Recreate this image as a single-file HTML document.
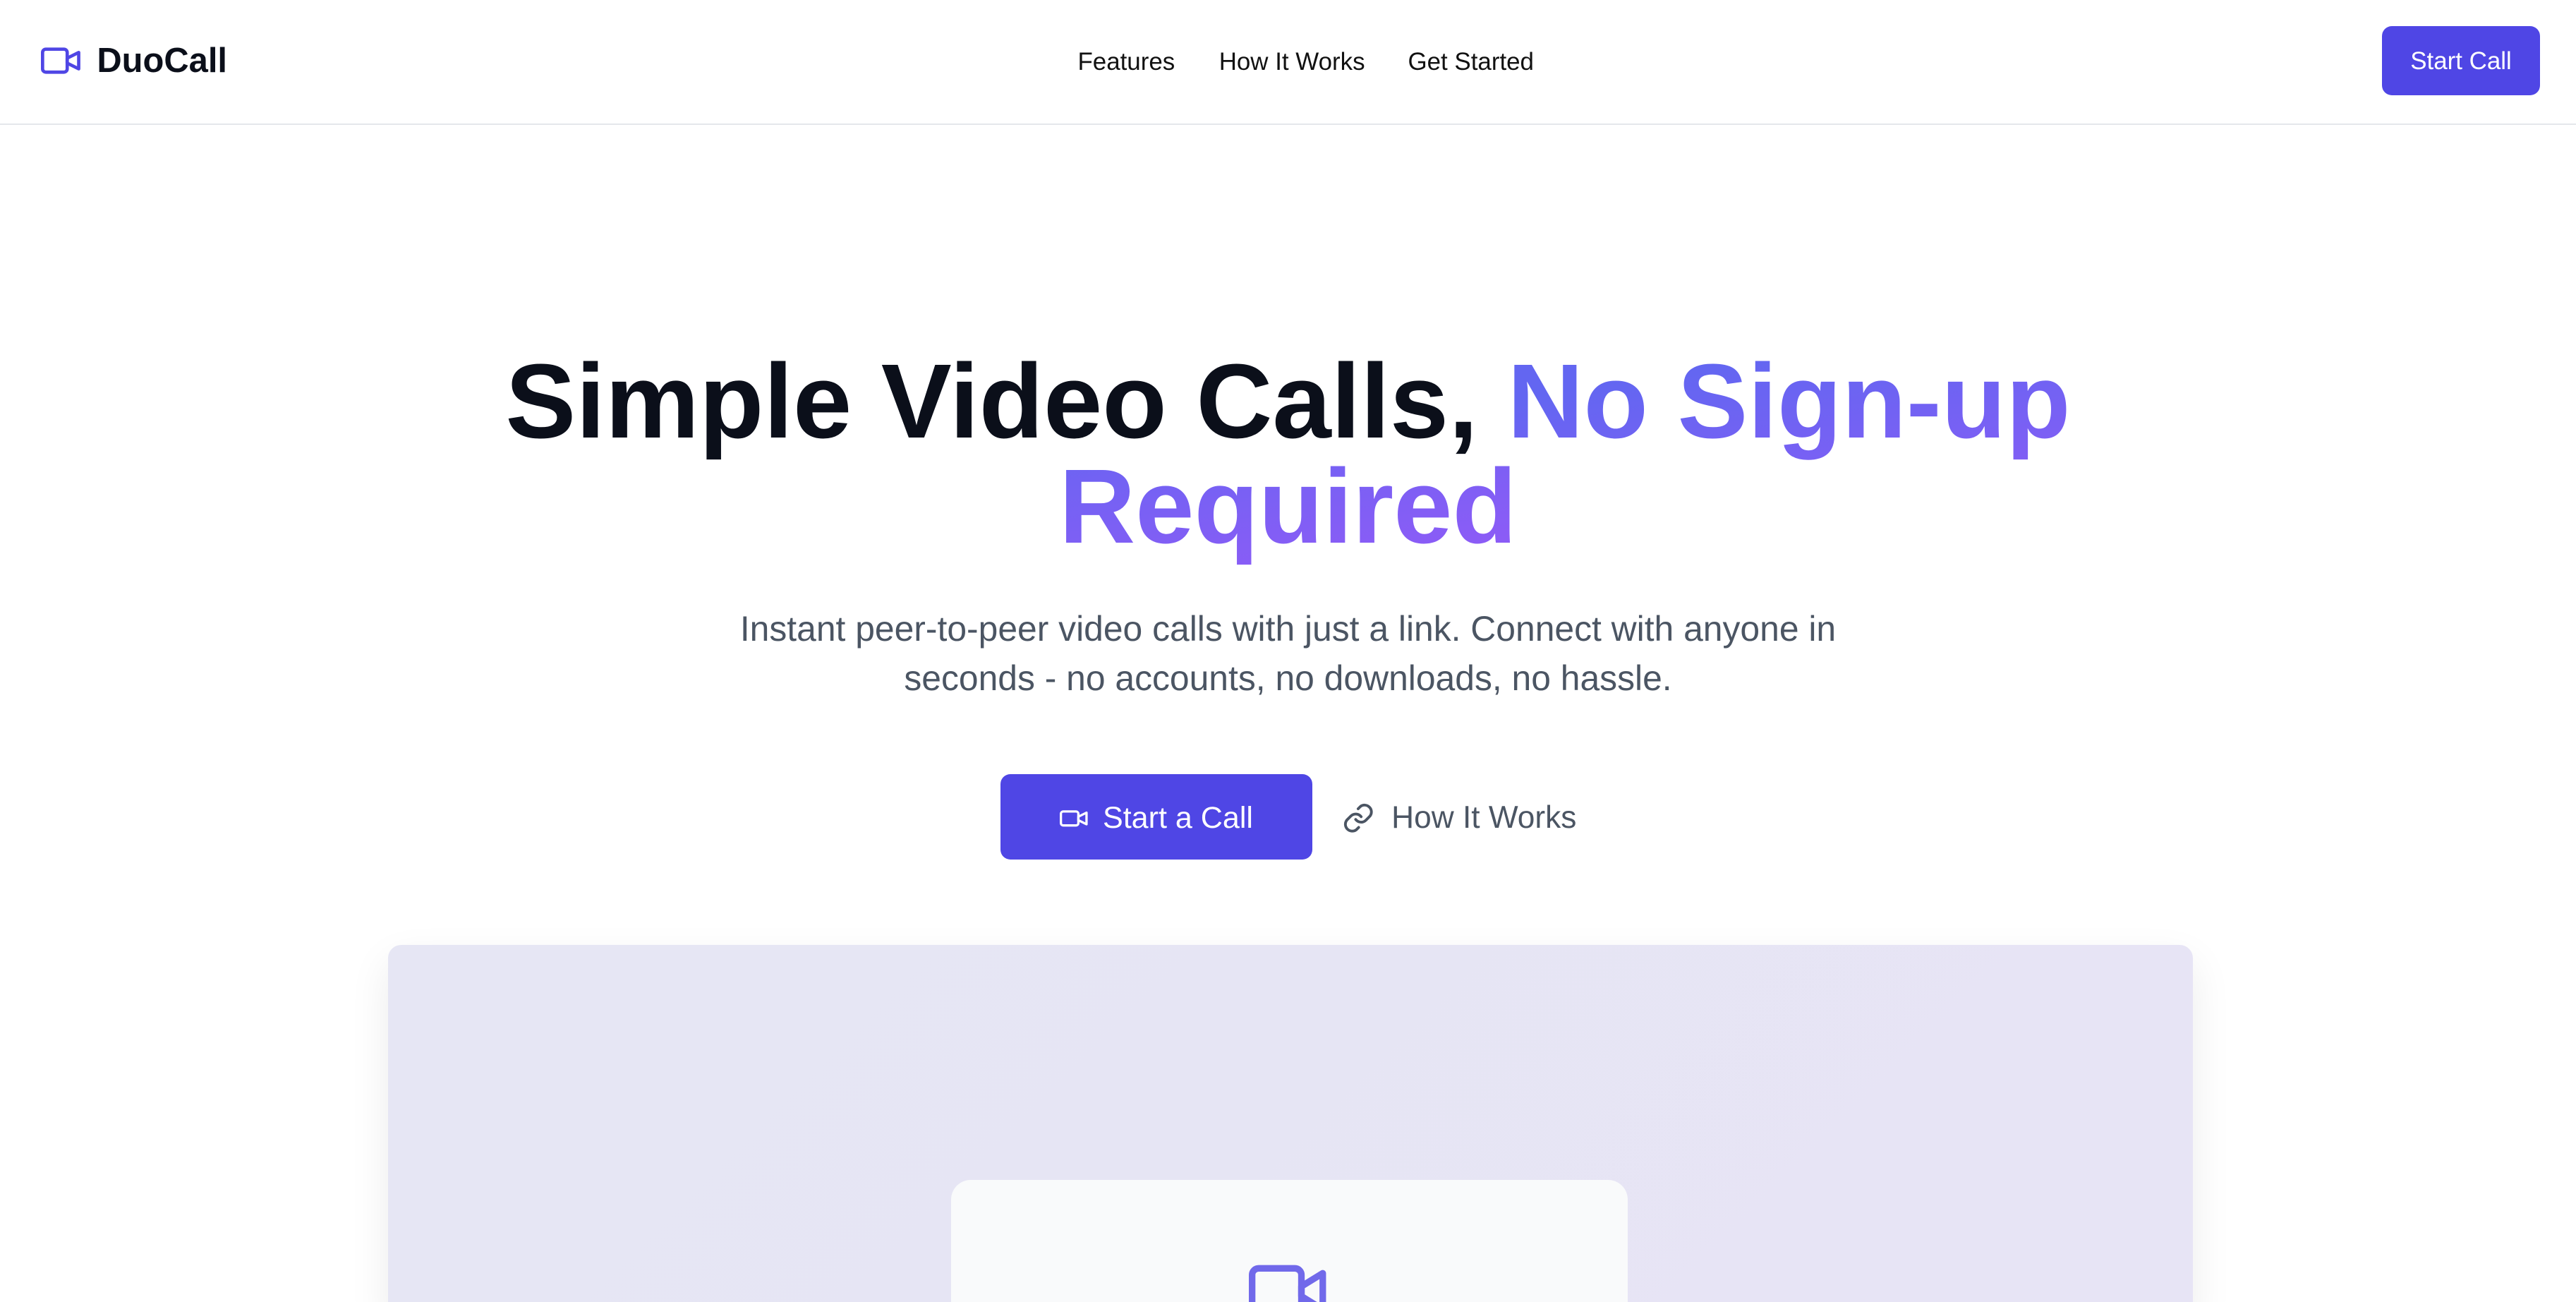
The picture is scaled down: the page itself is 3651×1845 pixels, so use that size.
<!DOCTYPE html>
<html><head><meta charset="utf-8"><style>
html,body{margin:0;padding:0;background:#fff;overflow:hidden}
body{zoom:2.32844;width:1568px;height:792px;font-family:"Liberation Sans",sans-serif;position:relative;overflow:hidden}
nav{position:absolute;left:0;top:0;width:1568px;height:75px;border-bottom:1px solid #e5e7eb;background:#fff}
.logo{position:absolute;left:25px;top:25px;display:flex;align-items:center;font-weight:700;font-size:21px;color:#0b0f1a}
.logo svg{margin-right:10px}
.links{position:absolute;top:29px;font-size:15px;color:#111}
.links span{position:absolute;white-space:nowrap}
.btn{position:absolute;left:1450px;top:16px;width:96px;height:42px;background:#4f46e5;border-radius:6px;color:#fff;font-size:15px;display:flex;align-items:center;justify-content:center;padding-top:1px;box-sizing:border-box}
h1{position:absolute;left:0;top:212px;width:1568px;margin:0;text-align:center;font-size:64.3px;line-height:64px;font-weight:700;color:#0b0f1a}
.grad{background:linear-gradient(170deg,#6366f1 20%,#8b5cf6 90%);-webkit-background-clip:text;background-clip:text;color:transparent}
p{position:absolute;left:424px;top:368px;width:720px;margin:0;text-align:center;font-size:21.4px;line-height:30px;color:#4b5563}
.cta{position:absolute;left:609px;top:471px;width:190px;height:52px;background:#4f46e5;border-radius:6px;color:#fff;font-size:18.5px;display:flex;align-items:center;justify-content:center;padding-top:2px;box-sizing:border-box}
.cta svg{margin-right:9px}
.how{position:absolute;left:817px;top:487px;font-size:19px;color:#4b5563;display:flex;align-items:center}
.how svg{margin-right:10px}
.panel{position:absolute;left:236px;top:575px;width:1099px;height:230px;border-radius:8px;background:linear-gradient(135deg,#e6e6f4,#e7e4f5);box-shadow:0 10px 25px rgba(0,0,0,.08)}
.card{position:absolute;left:343px;top:143px;width:412px;height:100px;border-radius:12px;background:#f9fafb}
.card svg{position:absolute;left:181px;top:44px}
</style></head><body>
<nav>
<div class="logo"><svg width="24" height="24" viewBox="0 0 24 24" fill="none" stroke="#4f46e5" stroke-width="2" stroke-linecap="round" stroke-linejoin="round"><rect x="1" y="5" width="15" height="14" rx="2"/><path d="M16 10.5 23 7v10l-7-3.5z"/></svg>DuoCall</div>
<div class="links"><span style="left:656px">Features</span><span style="left:742px">How It Works</span><span style="left:857px">Get Started</span></div>
<div class="btn">Start Call</div>
</nav>
<h1>Simple Video Calls, <span class="grad">No Sign-up<br>Required</span></h1>
<p>Instant peer-to-peer video calls with just a link. Connect with anyone in seconds - no accounts, no downloads, no hassle.</p>
<div class="cta"><svg width="17" height="17" viewBox="0 0 24 24" fill="none" stroke="#fff" stroke-width="2" stroke-linejoin="round"><rect x="1" y="6" width="15" height="12" rx="2"/><path d="M16 10.5 23 7v10l-7-3.5z"/></svg>Start a Call</div>
<div class="how"><svg width="20" height="20" viewBox="0 0 24 24" fill="none" stroke="#4b5563" stroke-width="2" stroke-linecap="round"><path d="M10 13a5 5 0 0 0 7.5.5l3-3a5 5 0 0 0-7-7l-1.7 1.7"/><path d="M14 11a5 5 0 0 0-7.5-.5l-3 3a5 5 0 0 0 7 7l1.7-1.7"/></svg>How It Works</div>
<div class="panel"><div class="card"><svg width="48" height="48" viewBox="0 0 24 24" fill="none" stroke="#7169ea" stroke-width="2" stroke-linejoin="round"><rect x="1" y="5" width="15" height="14" rx="2"/><path d="M16 10.5 22.5 6.5v11L16 13.5z"/></svg></div></div>
</body></html>
